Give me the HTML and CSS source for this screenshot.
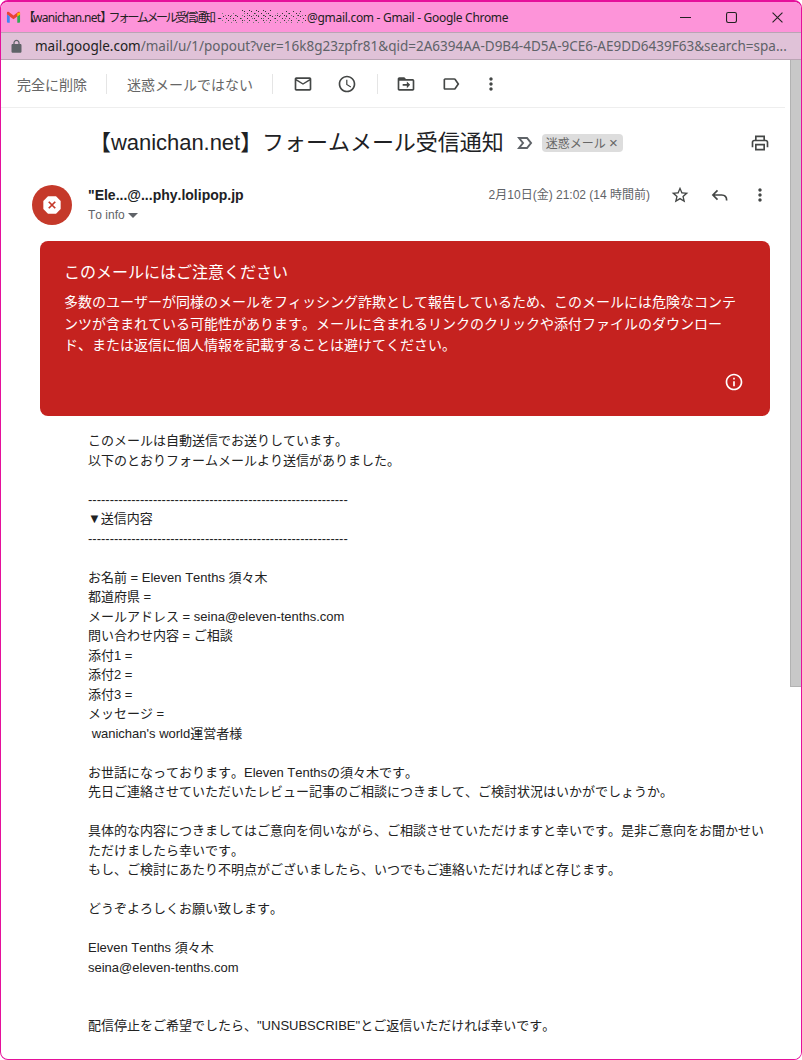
FILE: index.html
```html
<!DOCTYPE html>
<html lang="ja">
<head>
<meta charset="utf-8">
<title>Gmail</title>
<link rel="stylesheet" href="styles.css">
</head>
<body>
<div class="window">
  <header class="titlebar">
    <svg class="gmail" viewBox="0 0 16 12" width="15" height="12"><path fill="#ea4335" d="M1 3.2 8 8.4l7-5.2V1.4C15 .4 13.900 0 13.200.5L8 4.400 2.800.5C2.100 0 1 .4 1 1.400z"/><path fill="#4285f4" d="M1 3.200V11a1 1 0 0 0 1 1h2V5.200z"/><path fill="#34a853" d="M15 3.200V11a1 1 0 0 1-1 1h-2V5.200z"/><path fill="#fbbc04" d="M12 2 15 .8V3.200L12 5.400z"/></svg>
    <span class="title"><span class="squeeze-b">【</span><span class="latin">wanichan.net</span><span class="squeeze-b">】</span><span class="squeeze">フォームメール受信通知</span> -</span>
    <svg class="noise" width="85" height="14" viewBox="0 0 85 14"><defs><pattern id="n1" width="7" height="5" patternUnits="userSpaceOnUse"><path fill="#333" d="M1 1h1v1H1zM4 3h1v1H4zM6 0h1v1H6z"/></pattern><pattern id="n2" width="11" height="7" patternUnits="userSpaceOnUse"><path fill="#777" d="M0 3h1v1H0zM3 5h1v1H3zM8 1h1v1H8zM9 5h1v1H9z"/></pattern></defs><path fill="url(#n1)" d="M0 4h85v7H0zM20 0h30v4H20zM60 1h20v3H60z"/><path fill="url(#n2)" d="M0 2h85v11H0z"/></svg>
    <span class="title">@gmail.com - Gmail - Google Chrome</span>
    <div class="winbtns">
      <svg viewBox="0 0 10 10" width="11" height="11"><path d="M0 5h10" stroke="#222" fill="none"/></svg>
      <svg viewBox="0 0 10 10" width="11" height="11"><rect x=".5" y=".5" width="9" height="9" rx="1.500" stroke="#222" fill="none"/></svg>
      <svg viewBox="0 0 10 10" width="11" height="11"><path d="M.5.5l9 9M9.500.5l-9 9" stroke="#222" fill="none"/></svg>
    </div>
  </header>
  <div class="urlbar">
    <svg class="lock" viewBox="0 0 24 24" width="15" height="15"><path fill="#5f6368" d="M18 8h-1V6c0-2.760-2.240-5-5-5S7 3.240 7 6v2H6c-1.100 0-2 .9-2 2v10c0 1.100.9 2 2 2h12c1.100 0 2-.9 2-2V10c0-1.100-.9-2-2-2zM9 6c0-1.660 1.340-3 3-3s3 1.340 3 3v2H9V6z"/></svg>
    <span class="url"><span class="host">mail.google.com</span>/mail/u/1/popout?ver=16k8g23zpfr81&amp;qid=2A6394AA-D9B4-4D5A-9CE6-AE9DD6439F63&amp;search=spa...</span>
  </div>
  <div class="viewport">
    <main class="content">
      <nav class="toolbar">
        <span class="tool-text">完全に削除</span>
        <i class="sep"></i>
        <span class="tool-text">迷惑メールではない</span>
        <i class="sep"></i>
        <svg class="ic mail" viewBox="0 0 24 24"><path d="M20 4H4c-1.100 0-2 .9-2 2v12c0 1.100.9 2 2 2h16c1.100 0 2-.9 2-2V6c0-1.100-.9-2-2-2zm0 14H4V8l8 5 8-5v10zm-8-7L4 6h16l-8 5z"/></svg>
        <svg class="ic clock" viewBox="0 0 24 24"><path d="M11.990 2C6.470 2 2 6.480 2 12s4.470 10 9.990 10C17.520 22 22 17.520 22 12S17.520 2 11.990 2zM12 20c-4.420 0-8-3.580-8-8s3.580-8 8-8 8 3.580 8 8-3.580 8-8 8zm.5-13H11v6l5.250 3.150.75-1.230-4.500-2.670z"/></svg>
        <i class="sep"></i>
        <svg class="ic folder" viewBox="0 0 24 24"><path d="M20 6h-8l-2-2H4c-1.100 0-2 .9-2 2v12c0 1.100.9 2 2 2h16c1.100 0 2-.9 2-2V8c0-1.100-.9-2-2-2zm0 12H4V8h16v10zm-7-1 4-4-4-4v3H8v2h5z"/></svg>
        <svg class="ic label" viewBox="0 0 24 24"><path d="M17.630 5.840C17.270 5.330 16.670 5 16 5L5 5.010C3.900 5.010 3 5.900 3 7v10c0 1.100.9 1.990 2 1.990L16 19c.67 0 1.270-.33 1.630-.84L22 12l-4.370-6.160zM16 17H5V7h11l3.550 5L16 17z"/></svg>
        <svg class="ic" viewBox="0 0 24 24"><path d="M12 8c1.100 0 2-.9 2-2s-.9-2-2-2-2 .9-2 2 .9 2 2 2zm0 2c-1.100 0-2 .9-2 2s.9 2 2 2 2-.9 2-2-.9-2-2-2zm0 6c-1.100 0-2 .9-2 2s.9 2 2 2 2-.9 2-2-.9-2-2-2z"/></svg>
      </nav>
      <section class="subject">
        <h1>【wanichan.net】フォームメール受信通知</h1>
        <svg class="marker" viewBox="0 0 16 14" width="16" height="14"><path d="M2 2h8l4 5-4 5H2l4-5z" fill="none" stroke="#5f6368" stroke-width="2"/></svg>
        <span class="chip">迷惑メール <b>×</b></span>
        <svg class="ic print" viewBox="0 0 24 24"><path d="M19 8h-1V3H6v5H5c-1.660 0-3 1.340-3 3v6h4v4h12v-4h4v-6c0-1.660-1.340-3-3-3zM8 5h8v3H8V5zm8 14H8v-4h8v4zm2-2v-4H6v4H4v-6c0-.55.45-1 1-1h14c.55 0 1 .45 1 1v6h-2z"/></svg>
      </section>
      <section class="sender">
        <div class="avatar"><svg viewBox="0 0 24 24" width="26" height="26"><path fill="#fff" d="M8.300 4h7.400L20 8.300v7.400L15.700 20H8.300L4 15.700V8.300z"/><path d="M9 9l6 6M15 9l-6 6" stroke="#c5392a" stroke-width="1.600"/></svg></div>
        <div class="who">
          <div class="from">"Ele...@...phy.lolipop.jp</div>
          <div class="to">To info <i class="caret"></i></div>
        </div>
        <div class="date">2月10日(金) 21:02 (14 時間前)</div>
        <svg class="ic act" viewBox="0 0 24 24"><path d="M22 9.240l-7.190-.62L12 2 9.190 8.630 2 9.240l5.460 4.730L5.820 21 12 17.270 18.180 21l-1.630-7.03L22 9.240zM12 15.400l-3.760 2.270 1-4.280-3.320-2.880 4.380-.38L12 6.100l1.710 4.040 4.380.38-3.320 2.880 1 4.280L12 15.400z"/></svg>
        <svg class="ic act" viewBox="0 0 24 24"><path d="M9 6.500 3.500 12 9 17.500M4 12h10c4 0 6 2.500 6 6.500" fill="none" stroke="#444746" stroke-width="2"/></svg>
        <svg class="ic act" viewBox="0 0 24 24"><path d="M12 8c1.100 0 2-.9 2-2s-.9-2-2-2-2 .9-2 2 .9 2 2 2zm0 2c-1.100 0-2 .9-2 2s.9 2 2 2 2-.9 2-2-.9-2-2-2zm0 6c-1.100 0-2 .9-2 2s.9 2 2 2 2-.9 2-2-.9-2-2-2z"/></svg>
      </section>
      <section class="banner">
        <h2>このメールにはご注意ください</h2>
        <p>多数のユーザーが同様のメールをフィッシング詐欺として報告しているため、このメールには危険なコンテンツが含まれている可能性があります。メールに含まれるリンクのクリックや添付ファイルのダウンロード、または返信に個人情報を記載することは避けてください。</p>
        <div class="banner-foot"><svg viewBox="0 0 24 24" width="20" height="20"><path fill="#fff" d="M11 7h2v2h-2zm0 4h2v6h-2zm1-9C6.480 2 2 6.480 2 12s4.480 10 10 10 10-4.480 10-10S17.520 2 12 2zm0 18c-4.410 0-8-3.590-8-8s3.590-8 8-8 8 3.590 8 8-3.590 8-8 8z"/></svg></div>
      </section>
      <article class="body">このメールは自動送信でお送りしています。
以下のとおりフォームメールより送信がありました。

------------------------------------------------------------
▼送信内容
------------------------------------------------------------

お名前 = Eleven Tenths 須々木
都道府県 =
メールアドレス = seina@eleven-tenths.com
問い合わせ内容 = ご相談
添付1 =
添付2 =
添付3 =
メッセージ =
 wanichan's world運営者様

お世話になっております。Eleven Tenthsの須々木です。
先日ご連絡させていただいたレビュー記事のご相談につきまして、ご検討状況はいかがでしょうか。

具体的な内容につきましてはご意向を伺いながら、ご相談させていただけますと幸いです。是非ご意向をお聞かせいただけましたら幸いです。
もし、ご検討にあたり不明点がございましたら、いつでもご連絡いただければと存じます。

どうぞよろしくお願い致します。

Eleven Tenths 須々木
seina@eleven-tenths.com


配信停止をご希望でしたら、"UNSUBSCRIBE"とご返信いただければ幸いです。</article>
    </main>
    <aside class="scrollbar"><div class="thumb"></div></aside>
  </div>
</div>
</body>
</html>
```
FILE: styles.css
```css
* { box-sizing: border-box; }
html, body { margin: 0; height: 100%; background: #fff; }
body { font-family: "Liberation Sans", "Noto Sans CJK JP", sans-serif; color: #222; overflow: hidden; text-spacing-trim: space-all; font-kerning: none; }
.window {
  height: 1060px;
  border: 1px solid #e5109b;
  border-top-width: 2px;
  border-radius: 8px;
  overflow: hidden;
  display: flex;
  flex-direction: column;
}
.titlebar {
  flex: none;
  height: 30px;
  background: #fd94d9;
  display: flex;
  align-items: center;
  padding-left: 5px;
  font: 12px "Noto Sans", "Noto Sans CJK JP", sans-serif;
  letter-spacing: -0.3px;
  color: #222;
  white-space: nowrap;
}
.latin { letter-spacing: -0.7px; }
.squeeze { letter-spacing: -2.4px; margin-left: -2px; margin-right: 1px; }
.squeeze-b { letter-spacing: -2px; }
.gmail { margin-right: 2px; flex: none; }
.noise { margin-left: 1px; flex: none; }
.winbtns { margin-left: auto; display: flex; gap: 35px; padding-right: 18px; }
.urlbar {
  flex: none;
  height: 28px;
  background: #e0c2d8;
  border-top: 1px solid #b9a5b4;
  border-bottom: 1px solid #b9a5b4;
  display: flex;
  align-items: center;
  gap: 11px;
  padding-left: 8px;
  font: 13.5px "Noto Sans", sans-serif;
  color: #5f6368;
  white-space: nowrap;
}
.lock { flex: none; }
.host { color: #222; }
.viewport { flex: 1; min-height: 0; display: flex; }
.content { flex: 1; min-width: 0; overflow: hidden; }
.scrollbar { flex: none; width: 11px; background: #fff; }
.thumb { height: 627px; background: #c8c8c8; border-left: 1px solid #b2b2b2; border-bottom: 1px solid #b2b2b2; }
.ic { width: 20px; height: 20px; fill: #444746; flex: none; }
.toolbar {
  height: 48px;
  margin-right: 5px;
  border-bottom: 1px solid #eee;
  display: flex;
  align-items: center;
  padding-left: 16px;
  color: #5f6368;
  font-size: 14px;
}
.tool-text { color: #666; }
.sep { width: 1px; height: 20px; background: #e5e5e5; margin: 0 20px 0 19px; }
.mail { margin-right: 24px; }
.clock + .sep { margin: 0 18px 0 20px; }
.folder { margin-right: 25px; }
.label { margin-right: 20px; }
.subject { height: 69px; display: flex; align-items: center; padding: 0 20px 0 0; margin-left: 88px; }
.subject h1 { margin: -6px 0 0; font-size: 22px; font-weight: 400; color: #202124; letter-spacing: -0.04px; white-space: nowrap; }
.marker { margin-left: 13px; }
.chip { margin-left: 9px; background: #ddd; color: #666; border-radius: 4px; font-size: 12px; height: 18px; line-height: 18px; padding: 0 5px 0 4px; white-space: nowrap; }
.chip b { font-weight: 400; font-size: 15px; }
.print { margin-left: auto; }
.sender { height: 64px; display: flex; align-items: flex-start; padding: 8px 20px 0 31px; }
.avatar { width: 40px; height: 40px; border-radius: 50%; background: #c5392a; display: flex; align-items: center; justify-content: center; flex: none; }
.who { margin-left: 16px; flex: 1; }
.from { font-size: 14px; font-weight: 700; color: #202124; line-height: 20px; }
.to { font-size: 12px; color: #5f6368; line-height: 18px; margin-top: 1px; }
.caret { display: inline-block; width: 0; height: 0; border: 5px solid transparent; border-top: 5px solid #5f6368; border-bottom: 0; vertical-align: middle; }
.date { font-size: 12px; color: #5f6368; line-height: 20px; white-space: nowrap; }
.act { margin-left: 20px; }
.banner { margin: 0 20px 0 39px; height: 175px; background: #c5221f; border-radius: 8px; color: #fff; padding: 21px 24px 0; display: flex; flex-direction: column; }
.banner h2 { margin: 0; font-size: 16px; font-weight: 400; line-height: 22px; }
.banner p { margin: 8px 0 0; font-size: 14px; line-height: 21.5px; }
.banner-foot { margin-top: auto; padding: 0 2px 24px 0; display: flex; justify-content: flex-end; line-height: 0; }
.body { margin: 15px 0 0 87px; padding-right: 20px; font-size: 13px; line-height: 19.5px; color: #222; white-space: pre-wrap; }
```
